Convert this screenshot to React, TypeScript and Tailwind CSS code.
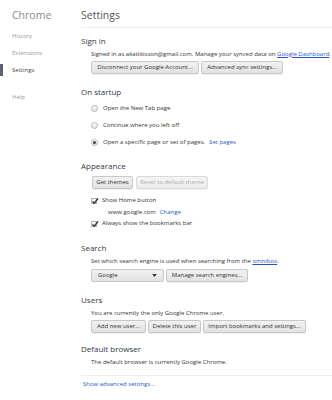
const font = { fontFamily: '"Open Sans", "Noto Sans", sans-serif' };

const Btn = ({ children, disabled, w }: { children: React.ReactNode; disabled?: boolean; w: string }) => (
    <div
        className={`${w} h-[13px] flex items-center justify-center rounded-[2px] border border-[#c8c8c8] bg-gradient-to-b from-[#f2f2f2] to-[#e2e2e2] text-[6px] shadow-[0_1px_0_rgba(0,0,0,0.06)] whitespace-nowrap ${disabled ? "text-[#b0b0b0] from-[#f4f4f4] to-[#ececec] border-[#dadada]" : "text-[#333]"}`}
    >
        {children}
    </div>
);

const Radio = ({ checked, label, children }: { checked?: boolean; label: string; children?: React.ReactNode }) => (
    <div className="h-[17px] flex items-center pl-[10px]">
        <div className="w-[7px] h-[7px] rounded-full border border-[#b5b5b5] bg-gradient-to-b from-[#fafafa] to-[#e6e6e6] flex items-center justify-center">
            {checked && <div className="w-[3px] h-[3px] rounded-full bg-[#444]" />}
        </div>
        <span className="ml-[5px] text-[6px] text-[#333]">{label}</span>
        {children}
    </div>
);

const Check = ({ label }: { label: string }) => (
    <div className="h-[11px] flex items-center pl-[10px]">
        <div className="w-[6px] h-[6px] border border-[#b5b5b5] bg-[#f6f6f6] relative">
            <svg viewBox="0 0 8 8" className="absolute -left-[1px] -top-[2px] w-[8px] h-[8px]">
                <path d="M1.5 4.5 L3.3 6.3 L7 1.5" fill="none" stroke="#333" strokeWidth="1.4" />
            </svg>
        </div>
        <span className="ml-[5px] text-[6px] text-[#333]">{label}</span>
    </div>
);

const Heading = ({ children }: { children: React.ReactNode }) => (
    <div className="h-[12px] flex items-center text-[8px] text-[#303942]">{children}</div>
);

const App = () => {
    return (
        <div className="w-[332px] h-[400px] bg-white flex overflow-hidden" style={font}>
            <div className="w-[81px] shrink-0 relative">
                <div className="h-[32px] flex items-center pl-[12px] text-[10.5px] text-[#8a8a8a]">Chrome</div>
                <div className="h-[8px] flex items-center pl-[12px] text-[6px] text-[#999]">History</div>
                <div className="h-[9px]" />
                <div className="h-[8px] flex items-center pl-[12px] text-[6px] text-[#999]">Extensions</div>
                <div className="h-[7px]" />
                <div className="h-[12px] flex items-center pl-[12px] text-[6px] text-[#444] relative">
                    <div className="absolute left-0 top-0 w-[3px] h-[12px] bg-[#5a6170]" />
                    Settings
                </div>
                <div className="h-[17px]" />
                <div className="h-[8px] flex items-center pl-[12px] text-[6px] text-[#999]">Help</div>
            </div>
            <div className="flex-1 flex flex-col">
                <div className="h-[32px] flex items-center text-[10.5px] text-[#555] shrink-0">Settings</div>
                <div className="h-px bg-[#eeeeee] -mt-[5px] mb-[7px]" />
                <Heading>Sign in</Heading>
                <div className="pl-[10px] mt-[2px] h-[10px] flex items-center text-[6px] text-[#333] whitespace-nowrap">
                    Signed in as akattkisson@gmail.com. Manage your synced data on&nbsp;
                    <span className="text-[#1e56c8] underline">Google Dashboard</span>.
                </div>
                <div className="pl-[10px] mt-[2px] flex gap-[2px]">
                    <Btn w="w-[108px]">Disconnect your Google Account...</Btn>
                    <Btn w="w-[82px]">Advanced sync settings...</Btn>
                </div>
                <div className="mt-[12px]">
                    <Heading>On startup</Heading>
                </div>
                <div className="mt-[2px]">
                    <Radio label="Open the New Tab page" />
                    <Radio label="Continue where you left off" />
                    <Radio checked label="Open a specific page or set of pages.">
                        <span className="ml-[4px] text-[6px] text-[#1e56c8]">Set pages</span>
                    </Radio>
                </div>
                <div className="mt-[9px]">
                    <Heading>Appearance</Heading>
                </div>
                <div className="pl-[11px] mt-[4px] flex gap-[3px]">
                    <Btn w="w-[41px]">Get themes</Btn>
                    <Btn w="w-[72px]" disabled>Reset to default theme</Btn>
                </div>
                <div className="mt-[6px]">
                    <Check label="Show Home button" />
                </div>
                <div className="h-[12px] flex items-center pl-[27px] text-[6px] text-[#333]">
                    www.google.com
                    <span className="ml-[4px] text-[#1e56c8]">Change</span>
                </div>
                <Check label="Always show the bookmarks bar" />
                <div className="mt-[13px]">
                    <Heading>Search</Heading>
                </div>
                <div className="pl-[10px] mt-[2px] h-[10px] flex items-center text-[6px] text-[#333] whitespace-nowrap">
                    Set which search engine is used when searching from the&nbsp;
                    <span className="text-[#1e56c8] underline">omnibox</span>.
                </div>
                <div className="pl-[10px] mt-[3px] flex gap-[2px]">
                    <div className="w-[73px] h-[13px] flex items-center justify-between px-[6px] rounded-[2px] border border-[#c8c8c8] bg-gradient-to-b from-[#f2f2f2] to-[#e2e2e2] text-[6px] text-[#333]">
                        Google
                        <svg viewBox="0 0 6 4" className="w-[5px] h-[3px]">
                            <path d="M0 0 L6 0 L3 4 Z" fill="#333" />
                        </svg>
                    </div>
                    <Btn w="w-[82px]">Manage search engines...</Btn>
                </div>
                <div className="mt-[12px]">
                    <Heading>Users</Heading>
                </div>
                <div className="pl-[10px] mt-[2px] h-[10px] flex items-center text-[6px] text-[#333]">
                    You are currently the only Google Chrome user.
                </div>
                <div className="pl-[10px] mt-[2px] flex gap-[2px]">
                    <Btn w="w-[55px]">Add new user...</Btn>
                    <Btn w="w-[53px]">Delete this user</Btn>
                    <Btn w="w-[103px]">Import bookmarks and settings...</Btn>
                </div>
                <div className="mt-[10px]">
                    <Heading>Default browser</Heading>
                </div>
                <div className="pl-[10px] mt-[2px] h-[10px] flex items-center text-[6px] text-[#333]">
                    The default browser is currently Google Chrome.
                </div>
                <div className="h-px bg-[#eeeeee] mt-[8px]" />
                <div className="h-[16px] flex items-center pl-[2px] text-[6px] text-[#1e56c8]">Show advanced settings...</div>
            </div>
        </div>
    );
};

export default App;
